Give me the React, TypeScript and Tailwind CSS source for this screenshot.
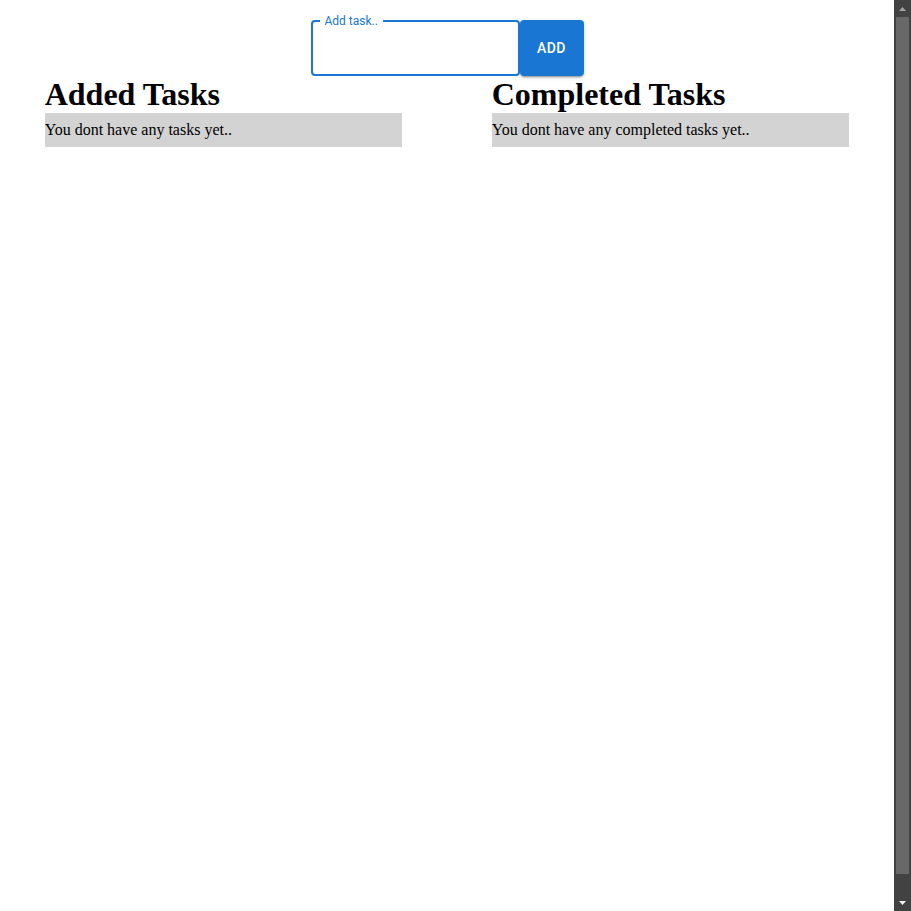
import React from "react";

function FakeScrollbar() {
  return (
    <div className="flex h-[911px] w-[17px] shrink-0 flex-col bg-[#424242]">
      <div className="flex h-[17px] items-center justify-center">
        <svg width="9" height="6" viewBox="0 0 9 6">
          <polygon points="4.5,1 8,5 1,5" fill="#a3a3a3" />
        </svg>
      </div>
      <div className="flex flex-1 flex-col px-[2px]">
        <div className="h-[857px] bg-[#686868]" />
      </div>
      <div className="flex h-[17px] items-center justify-center">
        <svg width="9" height="6" viewBox="0 0 9 6">
          <polygon points="1,1 8,1 4.5,5" fill="#f0f0f0" />
        </svg>
      </div>
    </div>
  );
}

export default function App() {
  return (
    <div className="flex h-[911px] w-[911px] overflow-hidden bg-white text-black">
      <div className="min-w-0 flex-1 bg-white text-black">
        <div className="flex justify-center pt-5">
          <div className="relative h-14 w-[209px] rounded border-2 border-[#1976d2]">
            <span
              className="absolute -top-[8px] left-[7px] bg-white px-[5px] text-[12px] leading-[14px] text-[#1976d2]"
              style={{ fontFamily: "Roboto, sans-serif" }}
            >
              Add task..
            </span>
          </div>
          <button
            className="h-14 w-16 rounded bg-[#1976d2] text-[14px] font-medium uppercase tracking-[0.4px] text-white shadow-[0_3px_1px_-2px_rgba(0,0,0,0.2),0_2px_2px_0_rgba(0,0,0,0.14),0_1px_5px_0_rgba(0,0,0,0.12)]"
            style={{ fontFamily: "Roboto, sans-serif" }}
          >
            Add
          </button>
        </div>
        <div
          className="flex justify-around"
          style={{ fontFamily: '"Liberation Serif", "Times New Roman", serif' }}
        >
          <div className="w-[40%]">
            <h1 className="m-0 text-[32px] font-bold leading-[37px]">Added Tasks</h1>
            <div className="bg-[#d3d3d3] py-2 text-[16px] leading-[18px]">
              You dont have any tasks yet..
            </div>
          </div>
          <div className="w-[40%]">
            <h1 className="m-0 text-[32px] font-bold leading-[37px]">Completed Tasks</h1>
            <div className="bg-[#d3d3d3] py-2 text-[16px] leading-[18px]">
              You dont have any completed tasks yet..
            </div>
          </div>
        </div>
      </div>
      <FakeScrollbar />
    </div>
  );
}
